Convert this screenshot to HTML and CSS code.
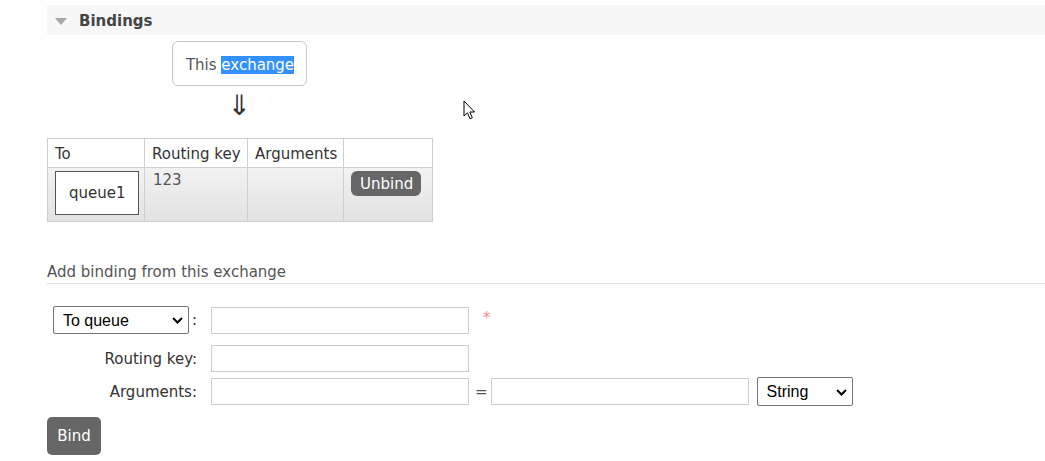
FILE: index.html
```html
<!DOCTYPE html>
<html>
<head>
<meta charset="utf-8">
<link rel="stylesheet" href="styles.css">
</head>
<body>
<div class="page">
  <div class="section-head">
    <span class="tri"></span>
    <span class="head-title">Bindings</span>
  </div>

  <div class="diagram">
    <div class="this-box">This <span class="sel">exchange</span></div>
    <div class="arrow">&#8659;</div>
  </div>

  <table class="bindings">
    <thead>
      <tr>
        <th class="c-to">To</th>
        <th class="c-key">Routing key</th>
        <th class="c-args">Arguments</th>
        <th class="c-act"></th>
      </tr>
    </thead>
    <tbody>
      <tr>
        <td><span class="queue-box">queue1</span></td>
        <td class="key">123</td>
        <td></td>
        <td><button class="btn-small" type="button">Unbind</button></td>
      </tr>
    </tbody>
  </table>

  <h3 class="add-title">Add binding from this exchange</h3>

  <form class="bind-form">
    <div class="row row-dest">
      <div class="label">
        <span class="select-wrap sel-dest">
          <select><option>To queue</option><option>To exchange</option></select>
          <svg class="chev" width="11" height="7" viewBox="0 0 11 7"><path d="M1 1 L5.5 5.5 L10 1" fill="none" stroke="#000" stroke-width="2"/></svg>
        </span><span class="colon">:</span>
      </div>
      <input class="field" type="text">
      <span class="req">*</span>
    </div>
    <div class="row row-key">
      <div class="label">Routing key:</div>
      <input class="field" type="text">
    </div>
    <div class="row row-args">
      <div class="label">Arguments:</div>
      <input class="field" type="text">
      <span class="eq">=</span>
      <input class="field" type="text">
      <span class="select-wrap sel-type">
        <select><option>String</option><option>Number</option><option>Boolean</option></select>
        <svg class="chev" width="11" height="7" viewBox="0 0 11 7"><path d="M1 1 L5.5 5.5 L10 1" fill="none" stroke="#000" stroke-width="2"/></svg>
      </span>
    </div>
    <button class="btn-bind" type="button">Bind</button>
  </form>
</div>

<svg class="cursor" width="14" height="21" viewBox="0 0 14 21">
  <path d="M1 1 L1 16 L4.5 12.8 L7 18.8 L9.3 17.8 L6.9 12 L11.6 12 Z" fill="#fff" stroke="#000" stroke-width="1" stroke-linejoin="miter"/>
</svg>
</body>
</html>
```

FILE: styles.css
```css
html, body {
  margin: 0;
  padding: 0;
  background: #fff;
}

body {
  font-family: "DejaVu Sans", Verdana, sans-serif;
  font-size: 15px;
  color: #444;
  width: 1045px;
  height: 461px;
  overflow: hidden;
  position: relative;
}

.page {
  padding: 5px 0 0 47px;
}

/* section header */
.section-head {
  display: flex;
  align-items: center;
  height: 30px;
  background: #f7f7f7;
  padding-left: 8px;
}

.tri {
  width: 0;
  height: 0;
  border-left: 6.5px solid transparent;
  border-right: 6.5px solid transparent;
  border-top: 7px solid #a8a8a8;
  margin-right: 11px;
  margin-top: 2px;
}

.head-title {
  font-weight: bold;
  color: #444;
  margin-left: 1px;
  padding-top: 2px;
}

/* diagram */
.diagram {
  width: 385px;
  display: flex;
  flex-direction: column;
  align-items: center;
  margin-top: 6px;
}

.this-box {
  border: 1px solid #c8c8c8;
  border-radius: 6px;
  padding: 14px 12px 11px 13px;
  line-height: 18px;
  color: #555;
  background: #fff;
}

.sel {
  background: #3390ff;
  color: #fff;
}

.arrow {
  font-size: 28px;
  line-height: 28px;
  height: 28px;
  margin-top: 6px;
  color: #333;
}

/* bindings table */
.bindings {
  border-collapse: collapse;
  margin-top: 18px;
  table-layout: fixed;
  width: 385px;
}

.bindings th,
.bindings td {
  box-sizing: border-box;
  border: 1px solid #cfcfcf;
  text-align: left;
  vertical-align: top;
  padding: 4px 7px;
  line-height: 18px;
  white-space: nowrap;
}

.bindings th {
  font-weight: normal;
  color: #333;
  background: #fff;
  height: 29px;
  vertical-align: middle;
  padding-top: 5px;
}

.c-to { width: 97px; }
.c-key { width: 103px; }
.c-args { width: 96px; }
.c-act { width: 89px; }

.bindings tbody tr {
  background: linear-gradient(#f2f2f2, #e2e2e2);
}

.bindings tbody td {
  height: 54px;
  padding-top: 3px;
}

.key {
  color: #555;
  padding-left: 8px !important;
}

.queue-box {
  display: inline-block;
  border: 1px solid #555;
  background: #fff;
  padding: 12px 12px 12px 13px;
  line-height: 18px;
  color: #333;
}

.btn-small {
  font-family: "DejaVu Sans", Verdana, sans-serif;
  font-size: 15px;
  line-height: 18px;
  background: #666;
  color: #fff;
  border: none;
  border-radius: 6px;
  padding: 4px 8px 3px 9px;
  width: 70px;
  margin-left: 0;
}

/* add binding */
.add-title {
  font-size: 15px;
  font-weight: normal;
  color: #555;
  margin: 41px 0 0 0;
  line-height: 18px;
  padding-bottom: 2px;
  border-bottom: 1px solid #e2e2e2;
}

.bind-form {
  margin: 0;
}

.row {
  display: flex;
  align-items: center;
}

.row-dest {
  margin-top: 22px;
}

.row-key {
  margin-top: 11px;
}

.row-args {
  margin-top: 5px;
}

.label {
  width: 150px;
  text-align: right;
  color: #333;
  margin-right: 14px;
  display: flex;
  justify-content: flex-end;
  align-items: center;
}

.colon {
  margin-left: 3px;
}

.select-wrap {
  position: relative;
  display: inline-flex;
}

.select-wrap select {
  -webkit-appearance: none;
  appearance: none;
  width: 100%;
  font-family: "Liberation Sans", Arial, sans-serif;
  font-size: 16px;
  color: #000;
  background: #fff;
  border: 1px solid #767676;
  border-radius: 2px;
  height: 28px;
  padding: 0 4px 0 9px;
  margin: 0;
}

.chev {
  position: absolute;
  right: 6px;
  top: 11px;
  pointer-events: none;
}

.sel-dest {
  width: 136px;
}

.sel-type {
  width: 96px;
  margin-left: 8px;
}

.sel-type select {
  height: 29px;
}

.sel-type .chev {
  top: 12px;
}

.field {
  box-sizing: border-box;
  width: 258px;
  height: 27px;
  border: 1px solid #cdcdcd;
  border-radius: 0;
  padding: 2px 4px;
  font-family: "DejaVu Sans", Verdana, sans-serif;
  font-size: 15px;
  background: #fff;
  margin: 0;
}

.req {
  color: #f38b8b;
  margin-left: 14px;
  margin-top: -4px;
  font-size: 15px;
}

.eq {
  color: #555;
  margin: 0 3px 0 6px;
}

.btn-bind {
  display: block;
  margin-top: 11px;
  font-family: "DejaVu Sans", Verdana, sans-serif;
  font-size: 15px;
  line-height: 18px;
  background: #666;
  color: #fff;
  border: none;
  border-radius: 5px;
  width: 54px;
  height: 38px;
  padding: 0;
}

.cursor {
  position: absolute;
  left: 463px;
  top: 100px;
}
```
